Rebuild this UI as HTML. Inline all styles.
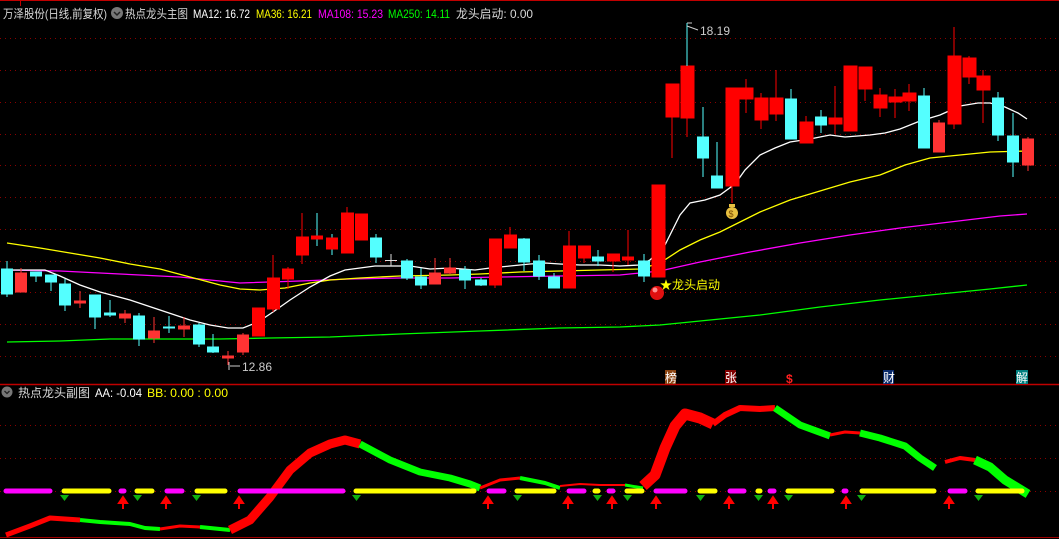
<!DOCTYPE html>
<html><head><meta charset="utf-8"><style>
html,body{margin:0;padding:0;background:#000;width:1059px;height:539px;overflow:hidden}
svg{display:block}
text{font-family:"Liberation Sans","Noto Sans CJK SC",sans-serif;font-size:12px}
</style></head><body>
<svg width="1059" height="539" viewBox="0 0 1059 539" xmlns="http://www.w3.org/2000/svg">
<rect width="1059" height="539" fill="#000"/>
<line x1="0" y1="0.5" x2="1059" y2="0.5" stroke="#c00000"/>
<line x1="20.5" y1="0" x2="20.5" y2="6" stroke="#c00000"/>
<line x1="0" y1="384.5" x2="1059" y2="384.5" stroke="#c00000" stroke-width="1.5"/>
<line x1="0" y1="537.5" x2="1059" y2="537.5" stroke="#a00000"/>
<g stroke="#8a0000" stroke-dasharray="1,4">
<line x1="0" y1="38.5" x2="1059" y2="38.5"/><line x1="0" y1="70.5" x2="1059" y2="70.5"/>
<line x1="0" y1="102.5" x2="1059" y2="102.5"/><line x1="0" y1="134.5" x2="1059" y2="134.5"/>
<line x1="0" y1="165.5" x2="1059" y2="165.5"/><line x1="0" y1="197.5" x2="1059" y2="197.5"/>
<line x1="0" y1="229.5" x2="1059" y2="229.5"/><line x1="0" y1="261.5" x2="1059" y2="261.5"/>
<line x1="0" y1="292.5" x2="1059" y2="292.5"/><line x1="0" y1="324.5" x2="1059" y2="324.5"/>
<line x1="0" y1="356.5" x2="1059" y2="356.5"/>
<line x1="0" y1="425.5" x2="1059" y2="425.5"/><line x1="0" y1="458.5" x2="1059" y2="458.5"/>
<line x1="0" y1="491.5" x2="1059" y2="491.5"/>
</g>
<g style="font-size:13px">
<text x="3" y="18" fill="#d8d8d8" textLength="104" lengthAdjust="spacingAndGlyphs">万泽股份(日线,前复权)</text>
<text x="125" y="18" fill="#d8d8d8" textLength="63" lengthAdjust="spacingAndGlyphs">热点龙头主图</text>
<text x="193" y="18" fill="#fff" textLength="57" lengthAdjust="spacingAndGlyphs">MA12: 16.72</text>
<text x="256" y="18" fill="#ffff00" textLength="56" lengthAdjust="spacingAndGlyphs">MA36: 16.21</text>
<text x="318" y="18" fill="#ff00ff" textLength="65" lengthAdjust="spacingAndGlyphs">MA108: 15.23</text>
<text x="388" y="18" fill="#00ff00" textLength="62" lengthAdjust="spacingAndGlyphs">MA250: 14.11</text>
<text x="456" y="18" fill="#d8d8d8" textLength="77" lengthAdjust="spacingAndGlyphs">龙头启动: 0.00</text>
</g>
<circle cx="117" cy="13" r="6" fill="#777"/><path d="M114 12 L117 15 L120 12" stroke="#222" stroke-width="1.5" fill="none"/>
<circle cx="7" cy="392" r="5.5" fill="#777"/><path d="M4.5 391 L7 393.5 L9.5 391" stroke="#222" stroke-width="1.3" fill="none"/>
<text x="18" y="397" fill="#d8d8d8" textLength="72" lengthAdjust="spacingAndGlyphs">热点龙头副图</text>
<text x="95" y="397" fill="#fff" textLength="47" lengthAdjust="spacingAndGlyphs">AA: -0.04</text>
<text x="147" y="397" fill="#ffff00" textLength="81" lengthAdjust="spacingAndGlyphs">BB: 0.00 : 0.00</text>
<polyline fill="none" stroke="#00ff00" stroke-width="1.3" points="7,342 60,341 110,339 160,339 220,339 270,338 330,337 400,334 480,331 560,328 620,327 660,325 700,321 760,315 820,307 880,300 940,294 990,289 1027,285"/>
<polyline fill="none" stroke="#ff00ff" stroke-width="1.3" points="7,270 60,271 120,274 180,277 240,283 300,281 350,279 400,278 450,278 500,277 560,276 620,275 660,271 700,262 750,252 800,243 850,235 900,228 950,222 1000,216 1027,214"/>
<polyline fill="none" stroke="#ffff00" stroke-width="1.3" points="7,243 40,248 70,253 100,258 130,264 160,269 190,277 220,285 240,289 260,290 285,288 310,283 330,280 360,278 400,276 450,275 480,274 520,272 560,271 600,270 640,269 660,263 680,250 700,240 720,232 740,222 760,212 790,200 820,191 850,182 880,175 905,165 930,158 960,155 990,152 1027,151"/>
<polyline fill="none" stroke="#fff" stroke-width="1.3" points="7,270 45,270 60,276 80,285 100,292 130,300 160,310 190,320 210,325 228,328 243,328 258,322 273,312 290,300 310,287 330,276 345,270 360,268 375,266 390,266 410,266 430,269 450,268 475,270 490,268 510,266 530,264 545,263 560,264 580,265 600,265 620,266 640,265 650,260 665,245 680,215 690,203 705,200 720,195 735,184 745,170 760,155 775,148 790,142 810,139 830,135 845,137 870,135 885,133 900,129 920,121 940,115 960,106 978,103 990,103 1005,107 1018,113 1027,119"/>
<g stroke="#54ffff" fill="#54ffff">
<line x1="7" y1="261" x2="7" y2="297"/><rect x="1.5" y="269" width="11" height="25"/>
<line x1="36" y1="272" x2="36" y2="282"/><rect x="30.5" y="272" width="11" height="4"/>
<line x1="51" y1="275" x2="51" y2="291"/><rect x="45.5" y="275" width="11" height="7"/>
<line x1="65" y1="279" x2="65" y2="311"/><rect x="59.5" y="284" width="11" height="21"/>
<line x1="95" y1="295" x2="95" y2="329"/><rect x="89.5" y="295" width="11" height="22"/>
<line x1="110" y1="300" x2="110" y2="317"/><rect x="104.5" y="313" width="11" height="2"/>
<line x1="139" y1="313" x2="139" y2="346"/><rect x="133.5" y="316" width="11" height="23"/>
<line x1="169" y1="316" x2="169" y2="333"/><rect x="163.5" y="327" width="11" height="1"/>
<line x1="199" y1="323" x2="199" y2="347"/><rect x="193.5" y="325" width="11" height="19"/>
<line x1="213" y1="334" x2="213" y2="353"/><rect x="207.5" y="347" width="11" height="5"/>
<line x1="317" y1="213" x2="317" y2="246"/><line x1="332" y1="234" x2="332" y2="255"/>
<line x1="376" y1="234" x2="376" y2="263"/><rect x="370.5" y="238" width="11" height="19"/>
<line x1="407" y1="259" x2="407" y2="280"/><rect x="401.5" y="261" width="11" height="17"/>
<line x1="421" y1="268" x2="421" y2="289"/><rect x="415.5" y="277" width="11" height="8"/>
<line x1="465" y1="266" x2="465" y2="289"/><rect x="459.5" y="270" width="11" height="10"/>
<line x1="481" y1="278" x2="481" y2="286"/><rect x="475.5" y="280" width="11" height="5"/>
<line x1="524" y1="238" x2="524" y2="271"/><rect x="518.5" y="239" width="11" height="23"/>
<line x1="539" y1="255" x2="539" y2="280"/><rect x="533.5" y="261" width="11" height="15"/>
<line x1="554" y1="273" x2="554" y2="288"/><rect x="548.5" y="277" width="11" height="11"/>
<line x1="598" y1="250" x2="598" y2="266"/><rect x="592.5" y="257" width="11" height="4"/>
<line x1="644" y1="254" x2="644" y2="282"/><rect x="638.5" y="261" width="11" height="15"/>
<line x1="703" y1="107" x2="703" y2="177"/><rect x="697.5" y="137" width="11" height="21"/>
<line x1="717" y1="142" x2="717" y2="188"/><rect x="711.5" y="176" width="11" height="12"/>
<line x1="791" y1="89" x2="791" y2="139"/><rect x="785.5" y="99" width="11" height="40"/>
<line x1="821" y1="110" x2="821" y2="133"/><rect x="815.5" y="117" width="11" height="8"/>
<line x1="924" y1="88" x2="924" y2="148"/><rect x="918.5" y="96" width="11" height="52"/>
<line x1="998" y1="92" x2="998" y2="141"/><rect x="992.5" y="98" width="11" height="37"/>
<line x1="1013" y1="113" x2="1013" y2="177"/><rect x="1007.5" y="136" width="11" height="26"/>
</g>
<line x1="391" y1="254" x2="391" y2="266" stroke="#ddd"/><line x1="385" y1="260.5" x2="397" y2="260.5" stroke="#ddd"/>
<g stroke="#ff3333" fill="#ff3333">
<line x1="21" y1="268" x2="21" y2="273"/><rect x="15.5" y="273" width="11" height="19"/>
<line x1="80" y1="291" x2="80" y2="308"/><rect x="74.5" y="301" width="11" height="2"/>
<line x1="125" y1="310" x2="125" y2="323"/><rect x="119.5" y="314" width="11" height="4"/>
<line x1="154" y1="317" x2="154" y2="343"/><rect x="148.5" y="331" width="11" height="7"/>
<line x1="184" y1="317" x2="184" y2="337"/><rect x="178.5" y="326" width="11" height="3"/>
<line x1="228" y1="351" x2="228" y2="365"/><rect x="222.5" y="356" width="11" height="2"/>
<line x1="243" y1="333" x2="243" y2="355"/><rect x="237.5" y="335" width="11" height="17"/>
<line x1="435" y1="258" x2="435" y2="284"/><rect x="429.5" y="273" width="11" height="11"/>
<line x1="450" y1="258" x2="450" y2="274"/><rect x="444.5" y="268" width="11" height="5"/>
<line x1="939" y1="120" x2="939" y2="152"/><rect x="933.5" y="123" width="11" height="29"/>
<line x1="1028" y1="137" x2="1028" y2="171"/><rect x="1022.5" y="139" width="11" height="26"/>
</g>
<g stroke="#ff0000" fill="#ff0000">
<rect x="252.5" y="308" width="12" height="28"/>
<line x1="273" y1="255" x2="273" y2="312"/><rect x="267.5" y="278" width="12" height="31"/>
<line x1="288" y1="267" x2="288" y2="289"/><rect x="282.5" y="269" width="11" height="10"/>
<line x1="302" y1="213" x2="302" y2="264"/><rect x="296.5" y="237" width="12" height="18"/>
<rect x="311.5" y="236" width="11" height="3"/>
<rect x="326.5" y="238" width="11" height="11"/>
<line x1="347" y1="207" x2="347" y2="213"/><rect x="341.5" y="213" width="12" height="40"/>
<rect x="355.5" y="214" width="12" height="26"/>
<line x1="495" y1="239" x2="495" y2="288"/><rect x="489.5" y="239" width="12" height="46"/>
<line x1="510" y1="227" x2="510" y2="235"/><rect x="504.5" y="235" width="12" height="13"/>
<line x1="569" y1="231" x2="569" y2="246"/><rect x="563.5" y="246" width="12" height="42"/>
<line x1="584" y1="258" x2="584" y2="263"/><rect x="578.5" y="246" width="12" height="12"/>
<line x1="613" y1="261" x2="613" y2="272"/><rect x="607.5" y="254" width="12" height="7"/>
<line x1="628" y1="230" x2="628" y2="265"/><rect x="622.5" y="257" width="11" height="3"/>
<rect x="652" y="185" width="13" height="92"/>
<line x1="672" y1="117" x2="672" y2="158"/><rect x="666" y="84" width="13" height="33"/>
<line x1="687" y1="118" x2="687" y2="137"/><rect x="681" y="66" width="13" height="52"/>
<line x1="732" y1="186" x2="732" y2="203"/><rect x="726" y="88" width="13" height="98"/>
<line x1="746" y1="79" x2="746" y2="113"/><rect x="740" y="88" width="13" height="11"/>
<line x1="761" y1="93" x2="761" y2="129"/><rect x="755" y="98" width="13" height="22"/>
<line x1="776" y1="70" x2="776" y2="121"/><rect x="770" y="98" width="13" height="16"/>
<line x1="806" y1="116" x2="806" y2="143"/><rect x="800" y="122" width="13" height="21"/>
<line x1="835" y1="86" x2="835" y2="134"/><rect x="829" y="118" width="13" height="6"/>
<rect x="844" y="66" width="13" height="65"/>
<line x1="865" y1="89" x2="865" y2="101"/><rect x="859" y="67" width="13" height="22"/>
<line x1="880" y1="88" x2="880" y2="117"/><rect x="874" y="95" width="13" height="13"/>
<line x1="895" y1="89" x2="895" y2="118"/><rect x="889" y="97" width="13" height="5"/>
<line x1="909" y1="84" x2="909" y2="111"/><rect x="903" y="93" width="13" height="8"/>
<line x1="954" y1="27" x2="954" y2="129"/><rect x="948" y="56" width="13" height="68"/>
<line x1="969" y1="56" x2="969" y2="84"/><rect x="963" y="58" width="13" height="19"/>
<line x1="983" y1="70" x2="983" y2="123"/><rect x="977" y="76" width="13" height="14"/>
</g>
<line x1="687" y1="23" x2="687" y2="66" stroke="#54ffff"/>
<path d="M687 23 L692 23 M687 26 L698 30" stroke="#ccc" fill="none"/>
<text x="700" y="35" fill="#ccc">18.19</text>
<path d="M229 362 L229 370 M230 366 L240 366" stroke="#ccc" fill="none"/>
<text x="242" y="371" fill="#ccc">12.86</text>
<circle cx="657" cy="293" r="7" fill="#e01010"/><circle cx="655" cy="290" r="2.5" fill="#ff9090"/>
<text x="660" y="289" fill="#ffff00">★龙头启动</text>
<ellipse cx="732" cy="213" rx="6" ry="6" fill="#e8c040"/><rect x="729" y="204" width="6" height="3" fill="#e8c040"/><text x="728.5" y="217" fill="#7a4a00" style="font-size:9px">$</text>
<rect x="665" y="370" width="11" height="14" fill="#8b4513"/><text x="665" y="382" fill="#fff">榜</text>
<rect x="725" y="370" width="11" height="14" fill="#800000"/><text x="725" y="382" fill="#fff">张</text>
<text x="786" y="383" fill="#ff2020" style="font-weight:bold">$</text>
<rect x="883" y="370" width="11" height="14" fill="#0a2a6a"/><text x="883" y="382" fill="#fff">财</text>
<rect x="1016" y="370" width="12" height="14" fill="#008080"/><text x="1016" y="382" fill="#fff">解</text>
<g fill="none" stroke-linejoin="round" stroke-linecap="butt">
<polyline stroke="#ff0000" stroke-width="5" points="6,535 30,526 50,518 80,520"/>
<polyline stroke="#00ff00" stroke-width="4" points="80,520 100,522 130,524 145,528 160,529"/>
<polyline stroke="#ff0000" stroke-width="3" points="160,529 180,526 200,527"/>
<polyline stroke="#00ff00" stroke-width="4" points="200,527 230,530"/>
<polyline stroke="#ff0000" stroke-width="9" points="230,530 250,520 270,497 290,470 310,453 330,444 345,440 360,444"/>
<polyline stroke="#00ff00" stroke-width="7" points="360,444 390,460 420,472 450,478 470,484 480,488"/>
<polyline stroke="#ff0000" stroke-width="3" points="480,488 500,480 520,478"/>
<polyline stroke="#00ff00" stroke-width="4" points="520,478 545,483 560,488"/>
<polyline stroke="#ff0000" stroke-width="2" points="560,486 580,484 600,485 625,485"/>
<polyline stroke="#00ff00" stroke-width="3" points="625,485 643,488"/>
<polyline stroke="#ff0000" stroke-width="11" points="643,486 655,475 665,448 675,426 685,414 700,418 713,424"/>
<polyline stroke="#ff0000" stroke-width="6" points="713,424 725,415 740,408 760,409 775,408"/>
<polyline stroke="#00ff00" stroke-width="7" points="775,408 800,425 830,436"/>
<polyline stroke="#ff0000" stroke-width="3" points="830,435 845,432 860,433"/>
<polyline stroke="#00ff00" stroke-width="7" points="860,433 880,438 905,446 920,458 935,468"/>
<polyline stroke="#ff0000" stroke-width="4" points="945,462 960,458 975,460"/>
<polyline stroke="#00ff00" stroke-width="9" points="975,460 990,467 1005,480 1028,494"/>
</g>
<g stroke-width="5" stroke-linecap="round">
<g stroke="#ff00ff">
<line x1="6" y1="491" x2="50" y2="491"/><line x1="121" y1="491" x2="124" y2="491"/>
<line x1="167" y1="491" x2="182" y2="491"/><line x1="240" y1="491" x2="343" y2="491"/>
<line x1="489" y1="491" x2="504" y2="491"/><line x1="569" y1="491" x2="584" y2="491"/>
<line x1="609" y1="491" x2="613" y2="491"/><line x1="656" y1="491" x2="685" y2="491"/>
<line x1="730" y1="491" x2="744" y2="491"/><line x1="770" y1="491" x2="774" y2="491"/>
<line x1="844" y1="491" x2="846" y2="491"/><line x1="950" y1="491" x2="965" y2="491"/>
</g>
<g stroke="#ffff00">
<line x1="64" y1="491" x2="109" y2="491"/><line x1="137" y1="491" x2="152" y2="491"/>
<line x1="197" y1="491" x2="225" y2="491"/><line x1="356" y1="491" x2="474" y2="491"/>
<line x1="517" y1="491" x2="554" y2="491"/><line x1="595" y1="491" x2="598" y2="491"/>
<line x1="627" y1="491" x2="642" y2="491"/><line x1="700" y1="491" x2="715" y2="491"/>
<line x1="758" y1="491" x2="760" y2="491"/><line x1="788" y1="491" x2="832" y2="491"/>
<line x1="862" y1="491" x2="934" y2="491"/><line x1="978" y1="491" x2="1022" y2="491"/>
</g>
</g>
<g fill="#ff0000" stroke="#ff0000" stroke-width="2">
<path d="M123 497 l4 6 l-8 0 z M123 503 l0 6"/>
<path d="M166 497 l4 6 l-8 0 z M166 503 l0 6"/><path d="M239 497 l4 6 l-8 0 z M239 503 l0 6"/>
<path d="M488 497 l4 6 l-8 0 z M488 503 l0 6"/><path d="M568 497 l4 6 l-8 0 z M568 503 l0 6"/>
<path d="M612 497 l4 6 l-8 0 z M612 503 l0 6"/><path d="M656 497 l4 6 l-8 0 z M656 503 l0 6"/>
<path d="M729 497 l4 6 l-8 0 z M729 503 l0 6"/><path d="M773 497 l4 6 l-8 0 z M773 503 l0 6"/>
<path d="M846 497 l4 6 l-8 0 z M846 503 l0 6"/><path d="M949 497 l4 6 l-8 0 z M949 503 l0 6"/>
</g>
<g fill="#10b010">
<path d="M60 495 l9 0 l-4.5 6 z"/><path d="M133 495 l9 0 l-4.5 6 z"/><path d="M192 495 l9 0 l-4.5 6 z"/>
<path d="M352 495 l9 0 l-4.5 6 z"/><path d="M513 495 l9 0 l-4.5 6 z"/><path d="M593 495 l9 0 l-4.5 6 z"/>
<path d="M623 495 l9 0 l-4.5 6 z"/><path d="M696 495 l9 0 l-4.5 6 z"/><path d="M754 495 l9 0 l-4.5 6 z"/>
<path d="M784 495 l9 0 l-4.5 6 z"/><path d="M857 495 l9 0 l-4.5 6 z"/><path d="M974 495 l9 0 l-4.5 6 z"/>
</g>
</svg>
</body></html>
